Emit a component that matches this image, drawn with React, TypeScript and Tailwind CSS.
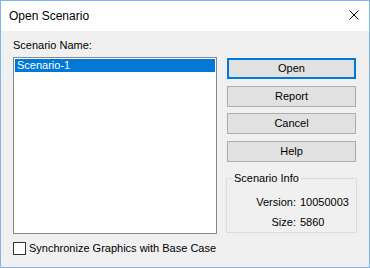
import React from 'react';

const font = { fontFamily: '"Liberation Sans", Arial, sans-serif' };

function DialogButton({ label, primary, className = '' }: { label: string; primary?: boolean; className?: string }) {
  return (
    <button
      type="button"
      className={
        'mx-[1px] block h-[21px] w-[129px] bg-[#e1e1e1] text-[11px] text-black leading-none ' +
        (primary ? 'border-2 border-[#0078d7] ' : 'border border-[#adadad] ') +
        className
      }
    >
      {label}
    </button>
  );
}

export default function App() {
  return (
    <div
      className="flex h-[268px] w-[370px] flex-col border border-[#7eb4ea] bg-[#f0f0f0] text-black"
      style={font}
    >
      {/* title bar */}
      <div className="flex h-[30px] items-center justify-between bg-white pl-[8px] pr-[10px]">
        <span className="text-[12px]">Open Scenario</span>
        <svg width="10" height="10" viewBox="0 0 10 10" className="mb-[2px]">
          <path d="M0.5 0.5L9.5 9.5M9.5 0.5L0.5 9.5" stroke="#000" strokeWidth="1" />
        </svg>
      </div>

      <div className="flex px-[12px]">
        {/* left column */}
        <div className="flex w-[204px] flex-col">
          <div className="mt-[8px] h-[13px] text-[11px] leading-[13px]">Scenario Name:</div>
          <div className="mt-[5px] h-[177px] border border-[#828790] bg-white p-[1px]">
            <div className="h-[13px] bg-[#0078d7] pl-[2px] text-[11px] leading-[13px] text-white">
              Scenario-1
            </div>
          </div>
          <label className="mt-[8px] flex items-center gap-[3px] text-[11px] leading-[13px]">
            <span className="h-[13px] w-[13px] border border-[#333333] bg-white" />
            <span>Synchronize Graphics with Base Case</span>
          </label>
        </div>

        {/* right column */}
        <div className="ml-[9px] flex w-[131px] flex-col pt-[27px]">
          <DialogButton label="Open" primary />
          <DialogButton label="Report" className="mt-[7px]" />
          <DialogButton label="Cancel" className="mt-[6px]" />
          <DialogButton label="Help" className="mt-[7px]" />

          <div className="relative mt-[16px] h-[55px] border border-[#dcdcdc] pt-[13px] text-[11px]">
            <span className="absolute -top-[7px] left-[6px] bg-[#f0f0f0] px-[1px] leading-[13px]">
              Scenario Info
            </span>
            <div className="grid grid-cols-[69px_auto] gap-x-[4px] leading-[20px]">
              <span className="text-right">Version:</span>
              <span>10050003</span>
              <span className="text-right">Size:</span>
              <span>5860</span>
            </div>
          </div>
        </div>
      </div>
    </div>
  );
}
